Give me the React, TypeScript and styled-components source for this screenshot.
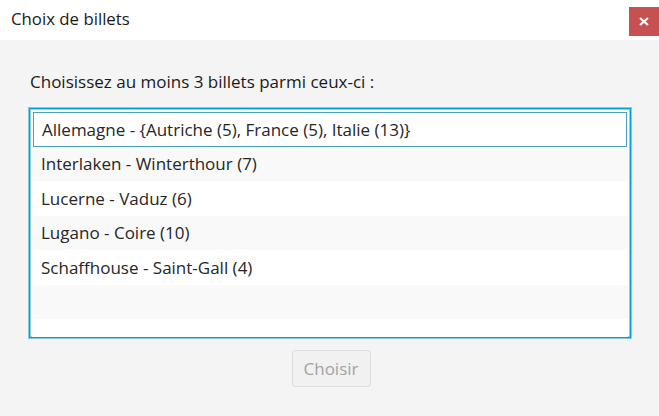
import React from 'react';
import styled, { createGlobalStyle } from 'styled-components';

const GlobalStyle = createGlobalStyle`
  html, body {
    margin: 0;
    padding: 0;
    background: #f4f4f4;
    font-family: "Open Sans", "Noto Sans", sans-serif;
  }
`;

const Window = styled.div`
  width: 659px;
  height: 416px;
  display: flex;
  flex-direction: column;
  background: #f4f4f4;
  overflow: hidden;
`;

const TitleBar = styled.div`
  height: 40px;
  background: #ffffff;
  display: flex;
  align-items: flex-start;
  justify-content: space-between;
`;

const Title = styled.div`
  padding: 9px 0 0 11px;
  font-size: 16.8px;
  color: #1a1a1a;
  line-height: 20px;
`;

const CloseButton = styled.div`
  margin-top: 7px;
  width: 30px;
  height: 29px;
  background: #c75050;
  color: #ffffff;
  display: flex;
  align-items: center;
  justify-content: center;
`;

const Content = styled.div`
  display: flex;
  flex-direction: column;
  padding: 31px 28px 0 29px;
`;

const Label = styled.div`
  font-size: 17px;
  color: #1a1a1a;
  line-height: 22px;
  padding-left: 1px;
  margin-bottom: 15px;
`;

const List = styled.div`
  height: 224px;
  border: 1px solid #039ed3;
  box-shadow: 0 0 0 1px #7fcbe6, inset 0 0 0 1px #8ed2ea;
  background: #ffffff;
  padding: 2px;
  display: flex;
  flex-direction: column;
  overflow: hidden;
`;

const Row = styled.div<{ odd: boolean; focused?: boolean }>`
  flex: 0 0 34.5px;
  box-sizing: border-box;
  display: flex;
  align-items: center;
  padding-left: ${(p) => (p.focused ? '8px' : '9px')};
  font-size: 17px;
  color: #262626;
  background: ${(p) => (p.odd ? '#f9f9f9' : '#ffffff')};
  border: ${(p) => (p.focused ? '1px solid #4aa3bd' : 'none')};
  margin: ${(p) => (p.focused ? '1px 1px 0 1px' : '0')};
`;

const Footer = styled.div`
  display: flex;
  justify-content: center;
  padding-top: 12px;
`;

const Button = styled.button`
  width: 79px;
  height: 37px;
  font-family: inherit;
  font-size: 17px;
  color: #a3a3a3;
  background: #f1f1f1;
  border: 1px solid #dcdcdc;
  border-radius: 3px;
  margin-left: 2px;
  padding: 0;
`;

const items = [
  'Allemagne - {Autriche (5), France (5), Italie (13)}',
  'Interlaken - Winterthour (7)',
  'Lucerne - Vaduz (6)',
  'Lugano - Coire (10)',
  'Schaffhouse - Saint-Gall (4)',
  '',
  '',
];

export default function App() {
  return (
    <Window>
      <GlobalStyle />
      <TitleBar>
        <Title>Choix de billets</Title>
        <CloseButton>
          <svg width="10" height="9" viewBox="0 0 10 9">
            <path d="M1 1 L9 8 M9 1 L1 8" stroke="#fff" strokeWidth="2.2" />
          </svg>
        </CloseButton>
      </TitleBar>
      <Content>
        <Label>Choisissez au moins 3 billets parmi ceux-ci :</Label>
        <List>
          {items.map((it, i) => (
            <Row key={i} odd={i % 2 === 1} focused={i === 0}>
              {it}
            </Row>
          ))}
        </List>
        <Footer>
          <Button disabled>Choisir</Button>
        </Footer>
      </Content>
    </Window>
  );
}
